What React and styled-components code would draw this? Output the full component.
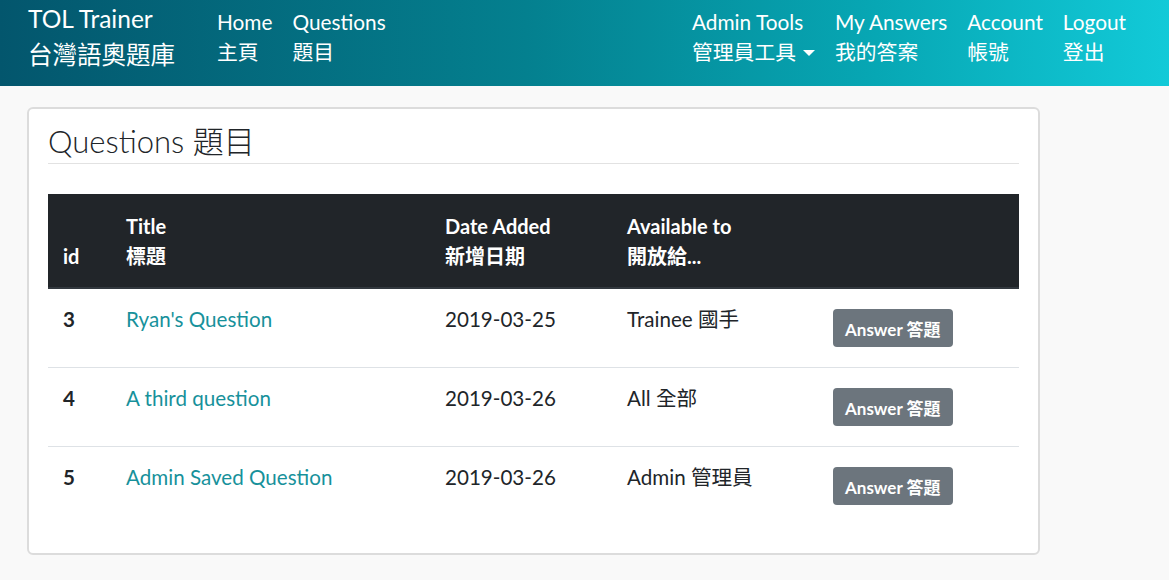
import styled, { createGlobalStyle } from "styled-components";

const GlobalStyle = createGlobalStyle`
  html, body {
    margin: 0;
    padding: 0;
    background: #f9f9f9;
    font-family: Lato, "Noto Sans CJK TC", sans-serif;
    color: #212529;
  }
`;

const NavBar = styled.header`
  display: flex;
  align-items: flex-start;
  justify-content: space-between;
  height: 86px;
  box-sizing: border-box;
  padding: 5px 43px 0 28px;
  background: linear-gradient(90deg, #03566d 0%, #04808f 45%, #07a7b4 75%, #12cad8 100%);
  color: #fff;
`;

const Left = styled.div`
  display: flex;
  align-items: flex-start;
`;

const Brand = styled.div`
  font-size: 24.5px;
  line-height: 36px;
  margin: -4px 42px 0 0;
`;

const Nav = styled.nav`
  display: flex;
  gap: ${(p) => p.$gap || 20}px;
  padding-top: 2px;
`;

const NavLink = styled.a`
  display: flex;
  flex-direction: column;
  font-size: 20.8px;
  line-height: 30px;
  color: #fff;
  text-decoration: none;
  white-space: nowrap;
`;

const Caret = styled.span`
  display: inline-block;
  margin-left: 7px;
  vertical-align: 4px;
  border-top: 6px solid #fff;
  border-left: 6px solid transparent;
  border-right: 6px solid transparent;
`;

const Main = styled.main`
  padding: 21px 129px 0 27px;
`;

const Card = styled.section`
  background: #fff;
  border: 2px solid #dcdcdc;
  border-radius: 6px;
  padding: 14px 19px 28px 19px;
`;

const Heading = styled.h1`
  margin: 0 0 30px;
  font-size: 31px;
  font-weight: 300;
  line-height: 37px;
  padding-bottom: 3px;
  border-bottom: 1px solid #e2e2e2;
  color: #212529;
`;

const Table = styled.table`
  width: 100%;
  border-collapse: collapse;
  table-layout: fixed;
`;

const Th = styled.th`
  background: #212529;
  color: #fff;
  text-align: left;
  vertical-align: bottom;
  font-size: 20px;
  font-weight: 700;
  line-height: 30px;
  padding: 17px 15px 16px;
  border-bottom: 2px solid #32383e;
`;

const Row = styled.tr`
  & + & td {
    border-top: 1px solid #dee2e6;
  }
`;

const Td = styled.td`
  vertical-align: top;
  font-size: 20.6px;
  line-height: 30px;
  padding: 15px 15px 20px;
  font-weight: ${(p) => (p.$bold ? 700 : 400)};
`;

const TitleLink = styled.a`
  color: #17919b;
  text-decoration: none;
`;

const AnswerButton = styled.button`
  margin-top: 5px;
  height: 38px;
  padding: 0 12px;
  border: none;
  border-radius: 4px;
  background: #6c757d;
  color: #fff;
  font-family: Lato, "Noto Sans CJK TC", sans-serif;
  font-size: 17px;
  font-weight: 700;
  cursor: pointer;
`;

const questions = [
  { id: 3, title: "Ryan's Question", date: "2019-03-25", to: "Trainee 國手" },
  { id: 4, title: "A third question", date: "2019-03-26", to: "All 全部" },
  { id: 5, title: "Admin Saved Question", date: "2019-03-26", to: "Admin 管理員" },
];

export default function App() {
  return (
    <>
      <GlobalStyle />
      <NavBar>
        <Left>
          <Brand>
            <div>TOL Trainer</div>
            <div>台灣語奧題庫</div>
          </Brand>
          <Nav $gap={20}>
            <NavLink href="#">
              <span>Home</span>
              <span>主頁</span>
            </NavLink>
            <NavLink href="#">
              <span>Questions</span>
              <span>題目</span>
            </NavLink>
          </Nav>
        </Left>
        <Nav $gap={20}>
          <NavLink href="#">
            <span>Admin Tools</span>
            <span>
              管理員工具<Caret />
            </span>
          </NavLink>
          <NavLink href="#">
            <span>My Answers</span>
            <span>我的答案</span>
          </NavLink>
          <NavLink href="#">
            <span>Account</span>
            <span>帳號</span>
          </NavLink>
          <NavLink href="#">
            <span>Logout</span>
            <span>登出</span>
          </NavLink>
        </Nav>
      </NavBar>

      <Main>
        <Card>
          <Heading>Questions 題目</Heading>
          <Table>
            <colgroup>
              <col style={{ width: 63 }} />
              <col style={{ width: 319 }} />
              <col style={{ width: 182 }} />
              <col style={{ width: 206 }} />
              <col />
            </colgroup>
            <thead>
              <tr>
                <Th>id</Th>
                <Th>
                  Title
                  <br />
                  標題
                </Th>
                <Th>
                  Date Added
                  <br />
                  新增日期
                </Th>
                <Th>
                  Available to
                  <br />
                  開放給...
                </Th>
                <Th />
              </tr>
            </thead>
            <tbody>
              {questions.map((q) => (
                <Row key={q.id}>
                  <Td $bold>{q.id}</Td>
                  <Td>
                    <TitleLink href="#">{q.title}</TitleLink>
                  </Td>
                  <Td>{q.date}</Td>
                  <Td>{q.to}</Td>
                  <Td>
                    <AnswerButton>Answer 答題</AnswerButton>
                  </Td>
                </Row>
              ))}
            </tbody>
          </Table>
        </Card>
      </Main>
    </>
  );
}
